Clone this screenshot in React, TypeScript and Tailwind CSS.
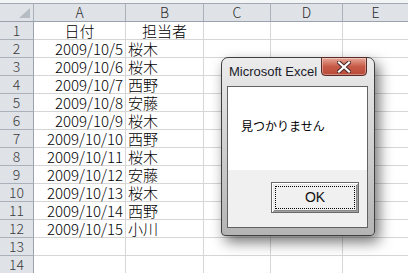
const rows: [string, string, string][] = [
  ["1", "日付", "担当者"],
  ["2", "2009/10/5", "桜木"],
  ["3", "2009/10/6", "桜木"],
  ["4", "2009/10/7", "西野"],
  ["5", "2009/10/8", "安藤"],
  ["6", "2009/10/9", "桜木"],
  ["7", "2009/10/10", "西野"],
  ["8", "2009/10/11", "桜木"],
  ["9", "2009/10/12", "安藤"],
  ["10", "2009/10/13", "桜木"],
  ["11", "2009/10/14", "西野"],
  ["12", "2009/10/15", "小川"],
  ["13", "", ""],
  ["14", "", ""],
];

const font = "font-['Noto_Sans_CJK_JP',sans-serif]";

const HeaderRow = () => (
  <div className="flex h-[18px] bg-[#dfe3e8] border-b border-[#9aa3ad] text-[14px] leading-[17px] font-light text-[#2a2a2a]">
    <div className="relative w-[34px] border-r border-[#aab1ba]">
      {/* select-all corner */}
      <div className="absolute left-[19px] top-[4px] w-0 h-0 border-l-[11px] border-l-transparent border-b-[10px] border-b-[#b6bcc4]" />
    </div>
    <div className="w-[92px] border-r border-[#aab1ba] text-center">A</div>
    <div className="w-[78px] border-r border-[#aab1ba] text-center">B</div>
    <div className="w-[67px] border-r border-[#aab1ba] text-center">C</div>
    <div className="w-[72px] border-r border-[#aab1ba] text-center">D</div>
    <div className="flex-1 text-center">E</div>
  </div>
);

const SheetRow = ({ n, a, b }: { n: string; a: string; b: string }) => {
  const isHead = n === "1";
  return (
    <div className="flex h-[18px] text-[15px] leading-[17px] font-light text-black">
      <div className="w-[34px] bg-[#dfe3e8] border-r border-b border-r-[#9aa3ad] border-b-[#aab1ba] text-center text-[14px] text-[#3a3a3a]">
        {n}
      </div>
      <div
        className={`w-[92px] border-r border-b border-[#d6d6d6] px-[2px] ${
          isHead ? "text-center" : "text-right"
        }`}
      >
        {a}
      </div>
      <div
        className={`w-[78px] border-r border-b border-[#d6d6d6] px-[2px] ${
          isHead ? "text-center" : "text-left"
        }`}
      >
        {b}
      </div>
      <div className="w-[67px] border-r border-b border-[#d6d6d6]" />
      <div className="w-[72px] border-r border-b border-[#d6d6d6]" />
      <div className="flex-1 border-b border-[#d6d6d6]" />
    </div>
  );
};

const MessageBox = () => (
  <div className="absolute left-[221px] top-[57px] w-[154px] h-[179px] rounded-t-[7px] rounded-b-[4px] border border-[#3f3f3f] bg-gradient-to-b from-[#ececec] via-[#d0d0d0] to-[#b4b4b4] shadow-[4px_6px_14px_rgba(0,0,0,0.55)]">
    {/* title bar */}
    <div className="flex h-[28px]">
      <div className="pl-[7px] pt-[6px] text-[13px] leading-[16px] text-[#1b1b2a] font-['Liberation_Sans',sans-serif]">
        Microsoft Excel
      </div>
      <div className="ml-auto mr-[7px] w-[46px] h-[19px] -mt-px rounded-b-[4px] border border-[#5a2a26] bg-gradient-to-b from-[#e6a898] via-[#c85a48] to-[#b84a38] flex items-center justify-center shadow-[inset_0_0_0_1px_rgba(255,255,255,0.35)]">
        <svg width="14" height="12" viewBox="0 0 14 12">
          <path
            d="M2 1.5 L12 10.5 M12 1.5 L2 10.5"
            stroke="#4a2a28"
            strokeWidth="4.2"
            strokeLinecap="square"
          />
          <path
            d="M2 1.5 L12 10.5 M12 1.5 L2 10.5"
            stroke="#ffffff"
            strokeWidth="2.2"
            strokeLinecap="square"
          />
        </svg>
      </div>
    </div>
    {/* client area */}
    <div className="ml-[5px] mr-[6px] h-[142px] border border-[#626262] flex flex-col">
      <div className="h-[83px] bg-white pl-[13px] pt-[31px] text-[12px] leading-[16px] text-black font-['Noto_Sans_CJK_JP',sans-serif]">
        見つかりません
      </div>
      <div className="flex-1 bg-[#f0f0f0] flex justify-end pr-[8px] pt-[12px]">
        <div className="w-[88px] h-[31px] border border-[#6a6a6a] bg-[#f0f0f0] shadow-[inset_1px_1px_0_#ffffff,inset_-1px_-1px_0_#a0a0a0,inset_2px_2px_0_#e8e8e8,inset_-2px_-2px_0_#8a8a8a]">
          <div className="m-[3px] h-[23px] border border-dotted border-black flex items-center justify-center text-[14px] text-[#101010] font-['Liberation_Sans',sans-serif]">
            OK
          </div>
        </div>
      </div>
    </div>
  </div>
);

export default function App() {
  return (
    <div className={`relative w-[408px] h-[273px] overflow-hidden bg-white ${font}`}>
      <div className="h-[4px] bg-[#f3f4f6] border-b border-[#a2a9b2]" />
      <HeaderRow />
      {rows.map(([n, a, b]) => (
        <SheetRow key={n} n={n} a={a} b={b} />
      ))}
      <MessageBox />
    </div>
  );
}
